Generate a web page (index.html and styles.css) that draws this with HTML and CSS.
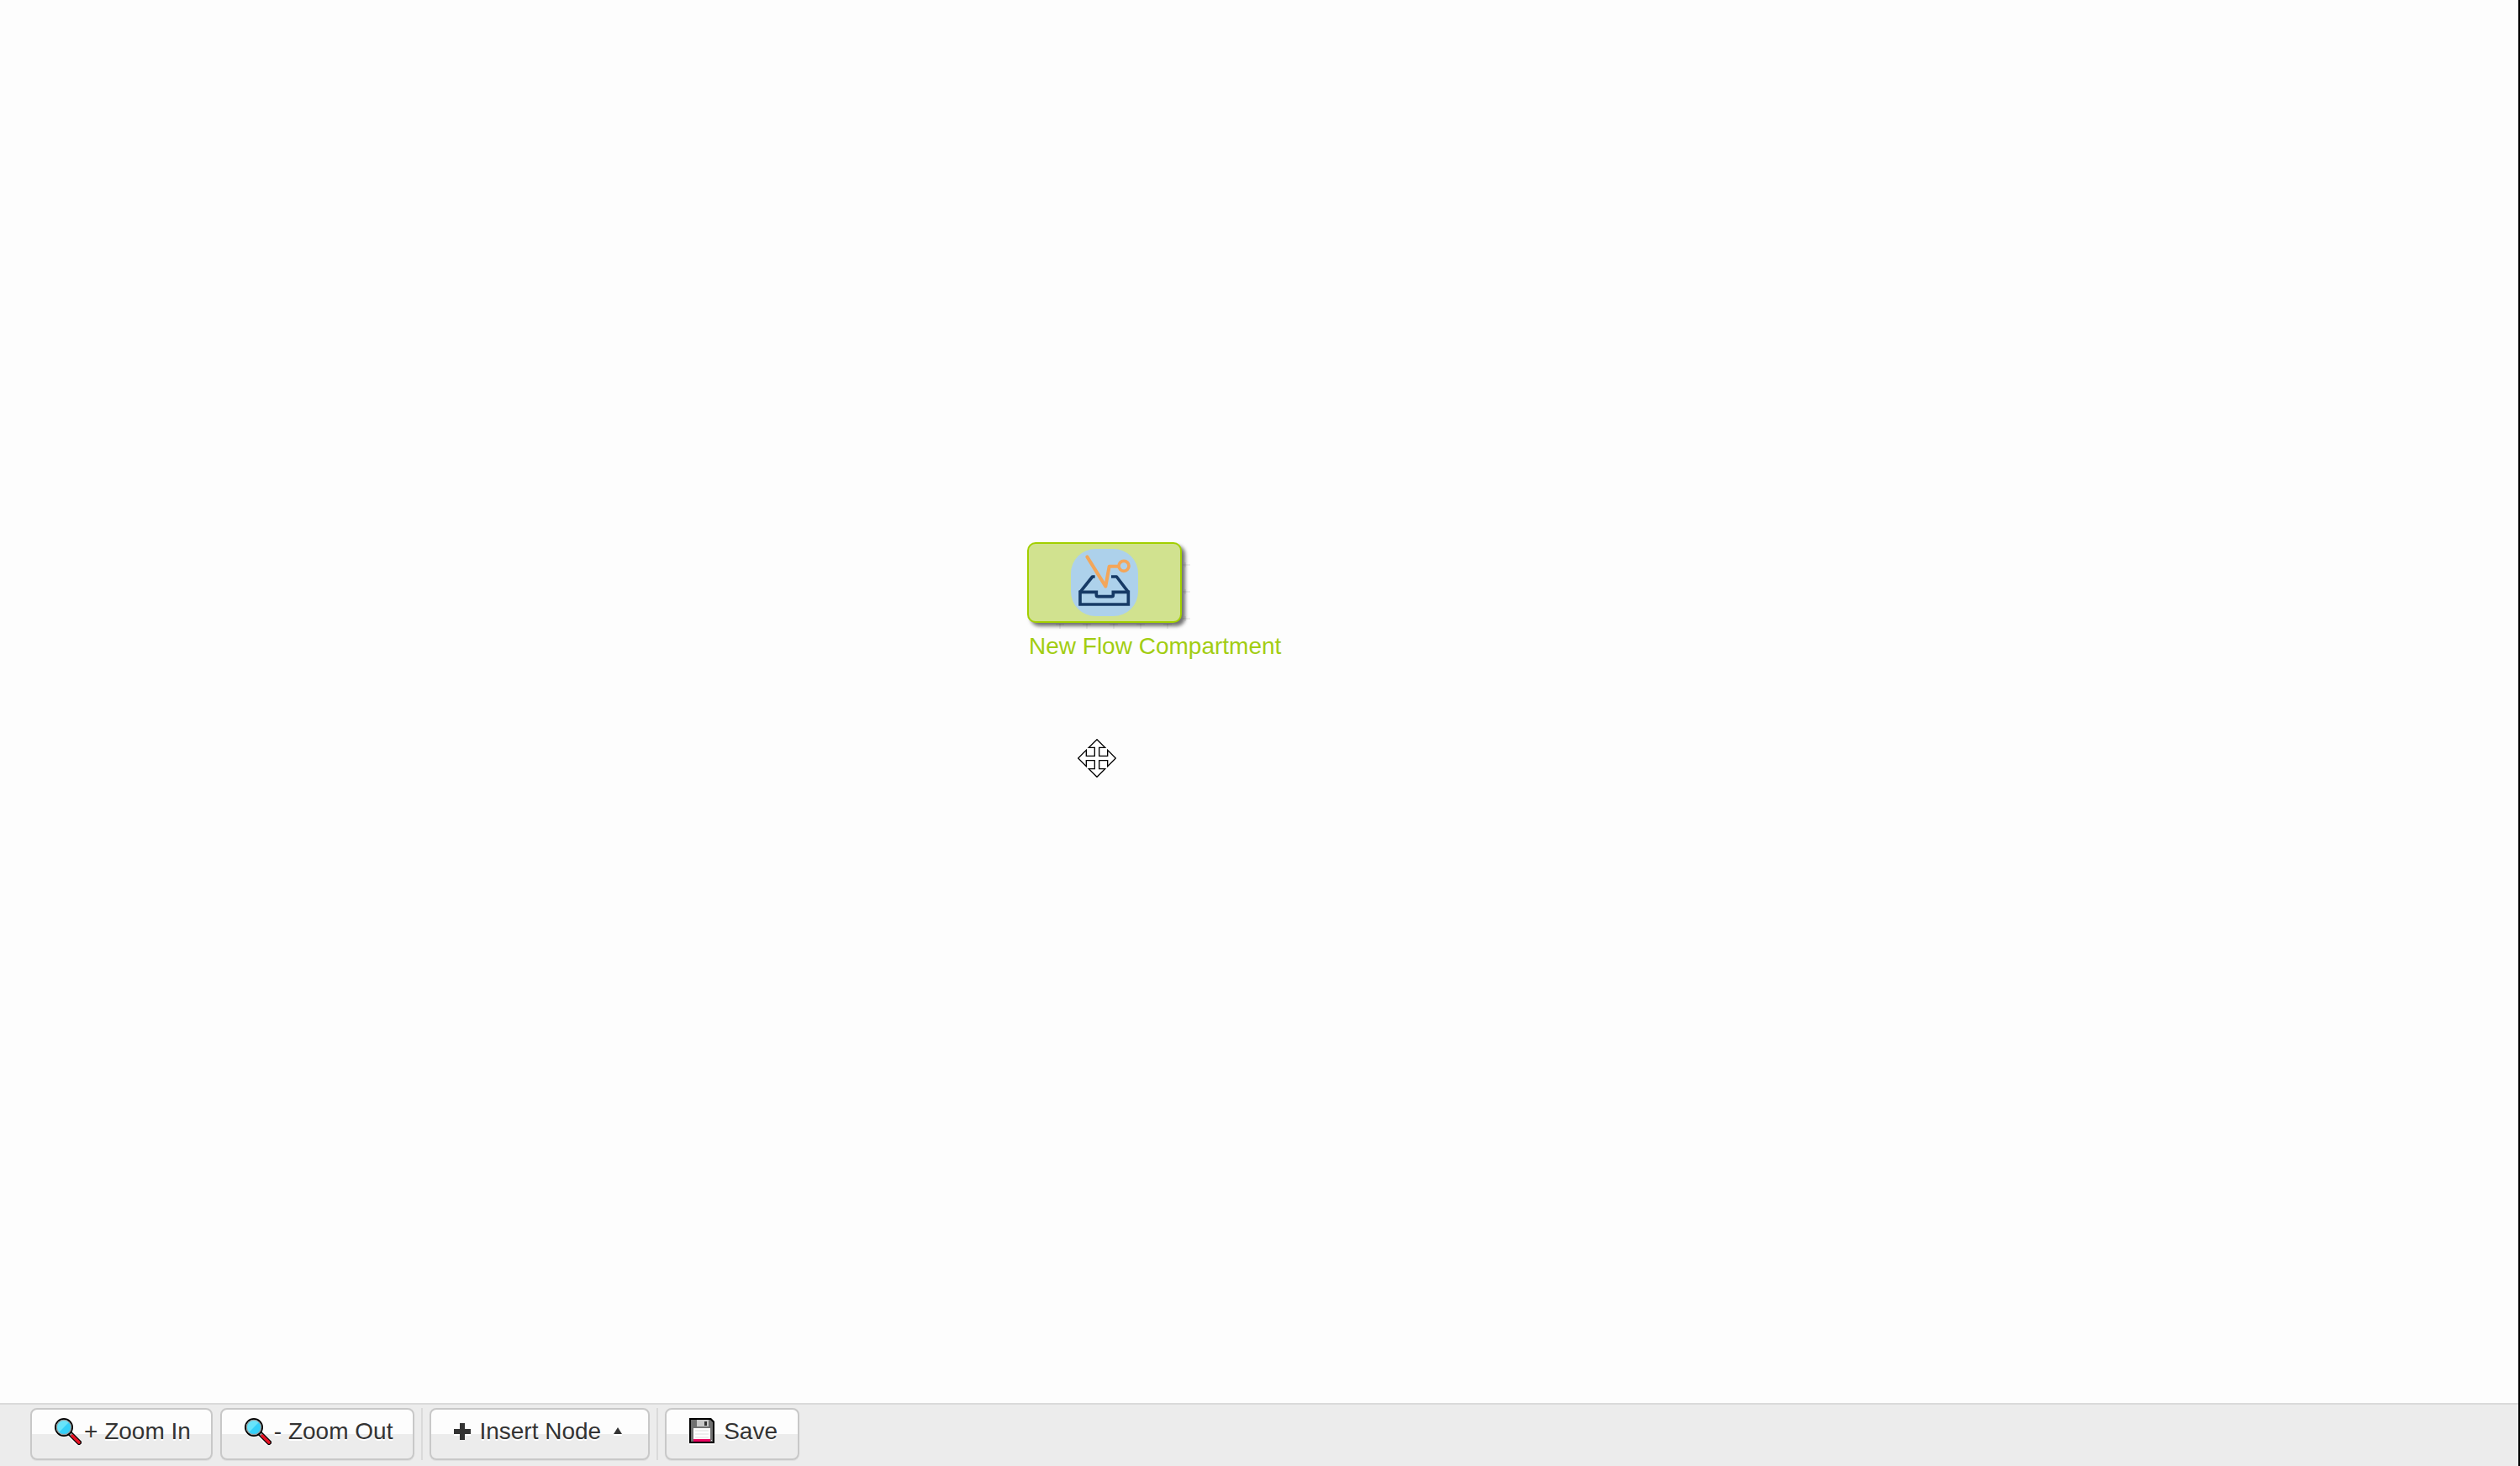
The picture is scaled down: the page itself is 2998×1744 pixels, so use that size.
FILE: index.html
```html
<!DOCTYPE html>
<html lang="en">
<head>
<meta charset="utf-8">
<title>Flow Editor</title>
<link rel="stylesheet" href="styles.css">
</head>
<body>
<svg class="defs" aria-hidden="true">
  <symbol id="magnifier" viewBox="0 0 32 32">
    <path d="M20 20 29 29" stroke="#fff" stroke-width="6" stroke-linecap="round" transform="translate(0 2)"/>
    <path d="M17 17 29 29" stroke="#000" stroke-width="6" stroke-linecap="round"/>
    <path d="M17 17 21 21" stroke="#999" stroke-width="3"/>
    <path d="M21 21 29 29" stroke="#e81224" stroke-width="3.500" stroke-linecap="round"/>
    <circle cx="11" cy="11" r="10" fill="#35d0f8" stroke="#000" stroke-width="2"/>
    <path d="M4.600 17.400A9 9 0 0 1 17.400 4.600Z" fill="#68e4fa"/>
    <circle cx="11" cy="11" r="8.700" fill="none" stroke="#9a9a9a" stroke-width="1.300"/>
  </symbol>
</svg>
<main class="canvas">
  <div class="node">
    <div class="node-box">
      <svg class="node-grid" viewBox="0 0 196 106" aria-hidden="true">
        <path d="M34 98h10M39 97v6M66 98h10M71 97v6M98 98h10M103 97v6M130 98h10M135 97v6M162 98h10M167 97v6M185 27h9M188 24v6M185 59h9M188 56v6M185 91h9M188 88v6"/>
      </svg>
      <svg class="node-icon" viewBox="0 0 240 240" aria-hidden="true">
        <rect width="240" height="240" rx="88" fill="#add1eb"/>
        <g fill="none" stroke="#163a66" stroke-width="11" stroke-linejoin="round">
          <path d="M86 99H77L33 154M144 99H163L205 154"/>
          <path stroke-linejoin="miter" d="M33 154V198H205V154H151V164Q151 170 145 170H97Q91 170 91 164V154Z"/>
        </g>
        <path d="M58 28 124 134 137 62H166" fill="none" stroke="#f3a65a" stroke-width="12" stroke-linecap="round" stroke-linejoin="round"/>
        <circle cx="189" cy="61" r="18" fill="none" stroke="#f3a65a" stroke-width="11"/>
      </svg>
    </div>
    <div class="node-label">New Flow Compartment</div>
  </div>
  <svg class="move-cursor" viewBox="0 0 138 138" aria-hidden="true">
    <path d="M69 2 40 31H61V61H31V40L2 69 31 98V77H61V107H40L69 136 98 107H77V77H107V98L136 69 107 40V61H77V31H98Z" fill="#fff" stroke="#000" stroke-width="4"/>
  </svg>
</main>
<footer class="toolbar">
  <div class="group">
    <button class="btn" type="button"><svg class="icon icon-zoom" aria-hidden="true"><use href="#magnifier"/></svg>+ Zoom In</button>
    <button class="btn" type="button"><svg class="icon icon-zoom" aria-hidden="true"><use href="#magnifier"/></svg>- Zoom Out</button>
  </div>
  <div class="separator"></div>
  <button class="btn" type="button"><svg class="icon icon-plus" viewBox="0 0 20 20" aria-hidden="true"><path d="M0 9H20V15H0Z" fill="#fff"/><path d="M7 0H13V7H20V13H13V20H7V13H0V7H7Z" fill="#333"/></svg>Insert Node<svg class="icon icon-arrow" viewBox="0 0 10 10" aria-hidden="true"><path d="M0 8h10v2H0z" fill="#fff"/><path d="M5 0 10 8H0Z" fill="#333"/></svg></button>
  <div class="separator"></div>
  <button class="btn" type="button"><svg class="icon icon-save" viewBox="0 0 30 32" aria-hidden="true">
    <path d="M0 3H30V32H0Z" fill="#fff"/>
    <path d="M0 0H26L30 4V30H0Z" fill="#000"/>
    <path d="M2 2H25L28 5V28H2Z" fill="#707070"/>
    <path d="M9 2H23V10H9Z" fill="#c8c8c8"/>
    <path d="M18 4H21V9H18Z" fill="#333"/>
    <path d="M5 12H25V26H5Z" fill="#fff"/>
    <path d="M7 15H23M7 19H23M7 23H23" stroke="#ddd"/>
    <path d="M5 25H25V28H5Z" fill="#e9045f"/>
    <path d="M26 26H27V27H26Z" fill="#ddd"/>
  </svg>Save</button>
</footer>
</body>
</html>
```
FILE: styles.css
```css
* { box-sizing: border-box; }

body {
  margin: 0;
  min-height: 100vh;
  display: flex;
  flex-direction: column;
  background: #fdfdfd;
  border-right: 2px solid #000;
  font: 28px/32px "Liberation Sans", Arial, sans-serif;
  color: #333;
}

svg { display: block; }
.defs { position: absolute; width: 0; height: 0; }

.canvas {
  position: relative;
  flex: 1;
  overflow: hidden;
}

.node {
  position: absolute;
  left: 1222px;
  top: 645px;
  color: #a2cd12;
}

.node-box {
  position: relative;
  width: 184px;
  height: 96px;
  display: flex;
  align-items: center;
  justify-content: center;
  background: #d1e28f;
  border: 2px solid #a2cf00;
  border-radius: 10px;
  box-shadow: 4px 4px 4px rgba(0, 0, 0, .55);
}

.node-grid {
  position: absolute;
  left: -2px;
  top: -2px;
  width: 196px;
  height: 106px;
  fill: none;
  stroke: rgba(0, 0, 0, .12);
}

.node-icon { width: 80px; height: 80px; }

.node-label {
  padding: 12px 0 0 2px;
  white-space: nowrap;
}

.move-cursor {
  position: absolute;
  left: 1282px;
  top: 879px;
  width: 46px;
  height: 46px;
}

.toolbar {
  display: flex;
  gap: 8px;
  padding: 4px 36px 7px;
  background: #ececec;
  border-top: 2px solid #dadada;
}

.group { display: flex; gap: 9px; }

.separator { width: 2px; background: #dadada; }

.btn {
  display: flex;
  align-items: center;
  height: 62px;
  padding: 0 24px 6px;
  border: 2px solid #c8c8c8;
  border-radius: 8px;
  background: linear-gradient(#fdfdfd 50%, #ececec 50%);
  box-shadow: 0 1px 1px rgba(0, 0, 0, .06);
  font: inherit;
  color: inherit;
  text-shadow: 0 2px 0 #fff;
  white-space: nowrap;
}

.icon { overflow: visible; flex: none; }
.icon-zoom { width: 32px; height: 32px; margin: 0 3px; }
.icon-plus { width: 20px; height: 20px; margin: 0 10px 0 3px; }
.icon-arrow { width: 10px; height: 10px; margin: 0 7px 0 15px; }
.icon-save { width: 30px; height: 32px; margin: 0 11px 0 3px; }
```
